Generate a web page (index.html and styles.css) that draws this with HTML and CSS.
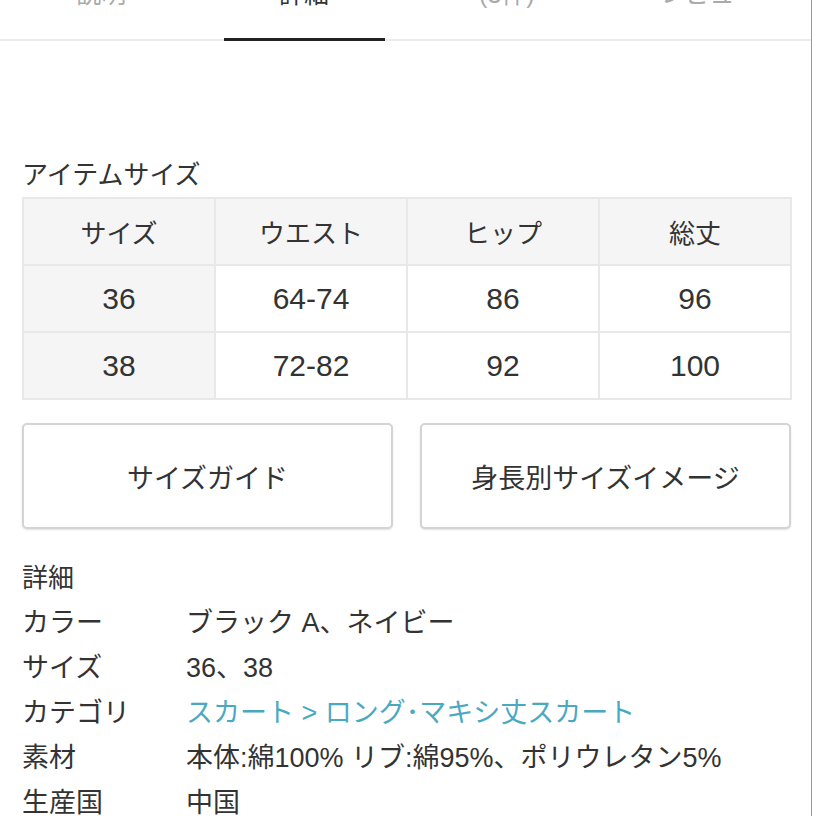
FILE: index.html
```html
<!DOCTYPE html>
<html lang="ja">
<head>
<meta charset="utf-8">
<link rel="stylesheet" href="styles.css">
</head>
<body>
<div class="page">
  <nav class="tabs">
    <div class="tab"><span class="tab-label">説明</span></div>
    <div class="tab active"><span class="tab-label">詳細</span></div>
    <div class="tab"><span class="tab-label">(3件)</span></div>
    <div class="tab"><span class="tab-label">レビュー</span></div>
  </nav>
  <section class="content">
    <h2 class="section-title">アイテムサイズ</h2>
    <table class="size-table">
      <thead>
        <tr><th>サイズ</th><th>ウエスト</th><th>ヒップ</th><th>総丈</th></tr>
      </thead>
      <tbody>
        <tr><th>36</th><td>64-74</td><td>86</td><td>96</td></tr>
        <tr><th>38</th><td>72-82</td><td>92</td><td>100</td></tr>
      </tbody>
    </table>
    <div class="buttons">
      <button class="btn">サイズガイド</button>
      <button class="btn">身長別サイズイメージ</button>
    </div>
    <h3 class="details-title">詳細</h3>
    <dl class="details">
      <div class="row"><dt>カラー</dt><dd>ブラック A、ネイビー</dd></div>
      <div class="row"><dt>サイズ</dt><dd>36、38</dd></div>
      <div class="row"><dt>カテゴリ</dt><dd><a class="link" href="#">スカート &gt; ロング･マキシ丈スカート</a></dd></div>
      <div class="row"><dt>素材</dt><dd>本体:綿100% リブ:綿95%、ポリウレタン5%</dd></div>
      <div class="row"><dt>生産国</dt><dd>中国</dd></div>
    </dl>
  </section>
</div>
</body>
</html>
```

FILE: styles.css
```css
html, body {
  margin: 0;
  padding: 0;
  background: #fff;
  height: 816px;
  overflow: hidden;
}
body {
  font-family: "Liberation Sans", "Noto Sans CJK JP", sans-serif;
  color: #333;
}
.page {
  width: 811px;
  height: 816px;
  border-right: 1px solid #9a9a9a;
  overflow: hidden;
}
.tabs {
  display: flex;
  height: 39px;
  border-bottom: 2px solid #ececec;
}
.tab {
  flex: 1;
  position: relative;
  display: flex;
  justify-content: center;
  overflow: visible;
}
.tab-label {
  font-size: 25px;
  line-height: 24px;
  margin-top: -18px;
  color: #aaa;
}
.tab.active .tab-label {
  color: #333;
}
.tab.active::after {
  content: "";
  position: absolute;
  left: 21px;
  right: 21px;
  bottom: -2px;
  height: 3px;
  background: #222;
}
.content {
  padding: 0 20px 0 22px;
}
.section-title {
  margin: 116px 0 0;
  font-size: 26px;
  font-weight: normal;
  line-height: 36px;
}
.size-table {
  width: 770px;
  margin-top: 4px;
  border-collapse: collapse;
  table-layout: fixed;
}
.size-table th,
.size-table td {
  border: 2px solid #e8e8e8;
  height: 65px;
  padding: 0;
  text-align: center;
  font-size: 30px;
  font-weight: normal;
  color: #333;
}
.size-table thead th {
  font-size: 26px;
}
.size-table thead th,
.size-table tbody th {
  background: #f5f5f5;
}
.size-table td {
  background: #fff;
}
.buttons {
  display: grid;
  grid-template-columns: 1fr 1fr;
  gap: 27px;
  margin-top: 23px;
}
.btn {
  height: 106px;
  background: #fff;
  border: 2px solid #d4d4d4;
  border-radius: 5px;
  box-shadow: 0 1px 2px rgba(0,0,0,0.12);
  font-family: inherit;
  font-size: 27px;
  color: #333;
  padding: 0;
}
.details-title {
  margin: 26px 0 0;
  font-size: 26px;
  font-weight: normal;
  line-height: 46px;
}
.details {
  margin: 0;
}
.row {
  display: flex;
  line-height: 45px;
  font-size: 27px;
}
.row dt {
  width: 164px;
  flex: none;
}
.row dd {
  margin: 0;
}
.link {
  color: #4aa9c2;
  text-decoration: none;
}
```
